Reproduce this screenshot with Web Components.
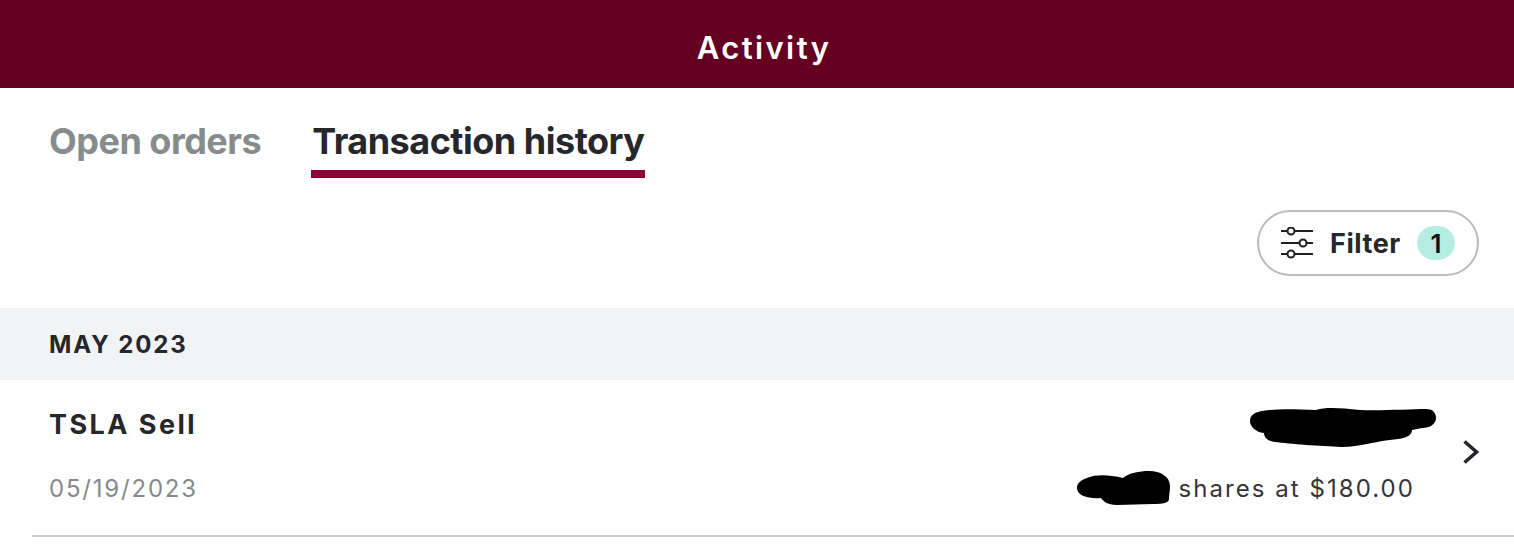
<!DOCTYPE html>
<html>
<head>
<meta charset="utf-8">
<title>Activity</title>
<style>
    html, body { margin: 0; padding: 0; background: #fff; }
    body { font-family: Inter, "Liberation Sans", sans-serif; color: #26272a; overflow: hidden; }
</style>
</head>
<body>
<activity-header>Activity</activity-header>
<activity-tabs>
    <activity-tab>Open orders</activity-tab>
    <activity-tab active>Transaction history</activity-tab>
</activity-tabs>
<filter-bar><filter-button count="1">Filter</filter-button></filter-bar>
<month-heading>MAY 2023</month-heading>
<transaction-row title="TSLA Sell" date="05/19/2023" detail="shares at $180.00"></transaction-row>

<script>
class ActivityHeader extends HTMLElement {
    constructor(){
        super();
        this.attachShadow({mode: 'open'});
        this.shadowRoot.innerHTML = `
<style>
    :host {
        display: flex;
        align-items: center;
        justify-content: center;
        height: 88px;
        padding-top: 7px;
        padding-left: 14px;
        box-sizing: border-box;
        background: #640022;
        color: #fff;
        font-size: 31px;
        font-weight: 600;
        letter-spacing: 2.4px;
    }
</style>
<slot></slot>`;
    }
}

class ActivityTabs extends HTMLElement {
    constructor(){
        super();
        this.attachShadow({mode: 'open'});
        this.shadowRoot.innerHTML = `
<style>
    :host {
        display: flex;
        gap: 49px;
        height: 90px;
        padding-left: 48px;
        box-sizing: border-box;
    }
</style>
<slot></slot>`;
    }
}

class ActivityTab extends HTMLElement {
    constructor(){
        super();
        this.attachShadow({mode: 'open'});
        this.shadowRoot.innerHTML = `
<style>
    :host {
        display: block;
        box-sizing: border-box;
        height: 90px;
        padding: 31px 1px 0;
        color: #868b8b;
        font-size: 36px;
        line-height: 44px;
        font-weight: 700;
        letter-spacing: -0.5px;
        white-space: nowrap;
    }
    :host([active]) {
        color: #26272a;
        border-bottom: 8px solid #900035;
    }
</style>
<slot></slot>`;
    }
}

class FilterBar extends HTMLElement {
    constructor(){
        super();
        this.attachShadow({mode: 'open'});
        this.shadowRoot.innerHTML = `
<style>
    :host {
        display: flex;
        justify-content: flex-end;
        box-sizing: border-box;
        height: 130px;
        padding: 32px 35px 0 0;
    }
</style>
<slot></slot>`;
    }
}

class FilterButton extends HTMLElement {
    constructor(){
        super();
        this.attachShadow({mode: 'open'});
        this.shadowRoot.innerHTML = `
<style>
    :host {
        display: flex;
        align-items: center;
        box-sizing: border-box;
        width: 222px;
        height: 66px;
        padding-left: 22px;
        border: 2px solid #b7bcba;
        border-radius: 33px;
        font-size: 27px;
        font-weight: 700;
        letter-spacing: 0.55px;
    }
    svg { display: block; flex: none; margin-right: 17px; }
    .count {
        display: flex;
        align-items: center;
        justify-content: center;
        width: 38px;
        height: 34px;
        margin-left: 16px;
        border-radius: 17px;
        background: #b5ede3;
        color: #111214;
        font-size: 26px;
        font-weight: 600;
        letter-spacing: 0;
    }
</style>
<svg width="32" height="32" viewBox="0 0 32 32" fill="none" stroke="#1f2022" stroke-width="2">
    <path d="M0 4H6.5M13.5 4H32M0 16H18.5M25.5 16H32M0 27H6.5M13.5 27H32"/>
    <circle cx="10" cy="4" r="3.5"/>
    <circle cx="22" cy="16" r="3.5"/>
    <circle cx="10" cy="27" r="3.5"/>
</svg>
<slot></slot>
<span class="count"></span>`;
    }

    connectedCallback(){
        this.shadowRoot.querySelector('.count').textContent = this.getAttribute('count');
    }
}

class MonthHeading extends HTMLElement {
    constructor(){
        super();
        this.attachShadow({mode: 'open'});
        this.shadowRoot.innerHTML = `
<style>
    :host {
        display: flex;
        align-items: center;
        box-sizing: border-box;
        height: 72px;
        padding: 1px 0 0 49px;
        background: #f2f3f5;
        font-size: 24px;
        font-weight: 700;
        letter-spacing: 1.9px;
    }
</style>
<slot></slot>`;
    }
}

class TransactionRow extends HTMLElement {
    constructor(){
        super();
        this.attachShadow({mode: 'open'});
        this.shadowRoot.innerHTML = `
<style>
    :host {
        display: block;
        margin-left: 32px;
        height: 157px;
        box-sizing: border-box;
        border-bottom: 2px solid #c8cdcb;
    }
    .wrap {
        display: grid;
        grid-template-columns: 1fr auto 99px;
        grid-template-rows: 64px 64px;
        padding: 12px 0 0 17px;
    }
    .title {
        align-self: center;
        font-size: 27px;
        font-weight: 700;
        letter-spacing: 2.45px;
    }
    .date {
        align-self: center;
        color: #87898b;
        font-size: 24px;
        letter-spacing: 1.8px;
    }
    .amount {
        justify-self: end;
        margin: 8px -21px 0 0;
        align-self: center;
    }
    .detail {
        display: flex;
        align-items: center;
        gap: 9px;
        font-size: 24px;
        letter-spacing: 2.05px;
        color: #333538;
        white-space: nowrap;
    }
    .chevron {
        grid-column: 3;
        grid-row: 1 / span 2;
        justify-self: start;
        align-self: center;
        margin: 0 0 8px 48px;
    }
    svg { display: block; }
</style>
<div class="wrap">
    <div class="title"></div>
    <svg class="amount" width="186" height="40" viewBox="0 0 186 40" fill="#000">
        <path d="M12 3C30 0 50 2 66 2C76 -1 90 0 110 2C130 3 160 1 176 1C184 1 186 6 186 10C186 16 180 20 172 20L162 22C162 26 158 30 148 31C125 33 110 39 92 39C70 38 40 36 25 34C17 33 14 29 14 25C5 24 0 18 0 13C0 7 5 4 12 3Z"/>
    </svg>
    <svg class="chevron" width="16" height="24" viewBox="0 0 16 24" fill="none" stroke="#26272a" stroke-width="3.6">
        <path d="M1.5 1.5L13.5 12L1.5 22.5"/>
    </svg>
    <div class="date"></div>
    <div class="detail">
        <svg width="93" height="34" viewBox="0 0 93 34" fill="#000">
            <path d="M10 7C20 3 32 4 46 7C52 2 62 0 72 0C84 0 93 6 93 15C93 20 92 24 92 28C92 32 86 33 76 33L40 34C30 34 26 30 24 27C12 28 0 25 0 17C0 12 4 9 10 7Z"/>
        </svg>
        <span class="text"></span>
    </div>
</div>`;
    }

    connectedCallback(){
        this.shadowRoot.querySelector('.title').textContent = this.getAttribute('title');
        this.shadowRoot.querySelector('.date').textContent = this.getAttribute('date');
        this.shadowRoot.querySelector('.text').textContent = this.getAttribute('detail');
    }
}

window.customElements.define('activity-header', ActivityHeader);
window.customElements.define('activity-tabs', ActivityTabs);
window.customElements.define('activity-tab', ActivityTab);
window.customElements.define('filter-bar', FilterBar);
window.customElements.define('filter-button', FilterButton);
window.customElements.define('month-heading', MonthHeading);
window.customElements.define('transaction-row', TransactionRow);
</script>
</body>
</html>
